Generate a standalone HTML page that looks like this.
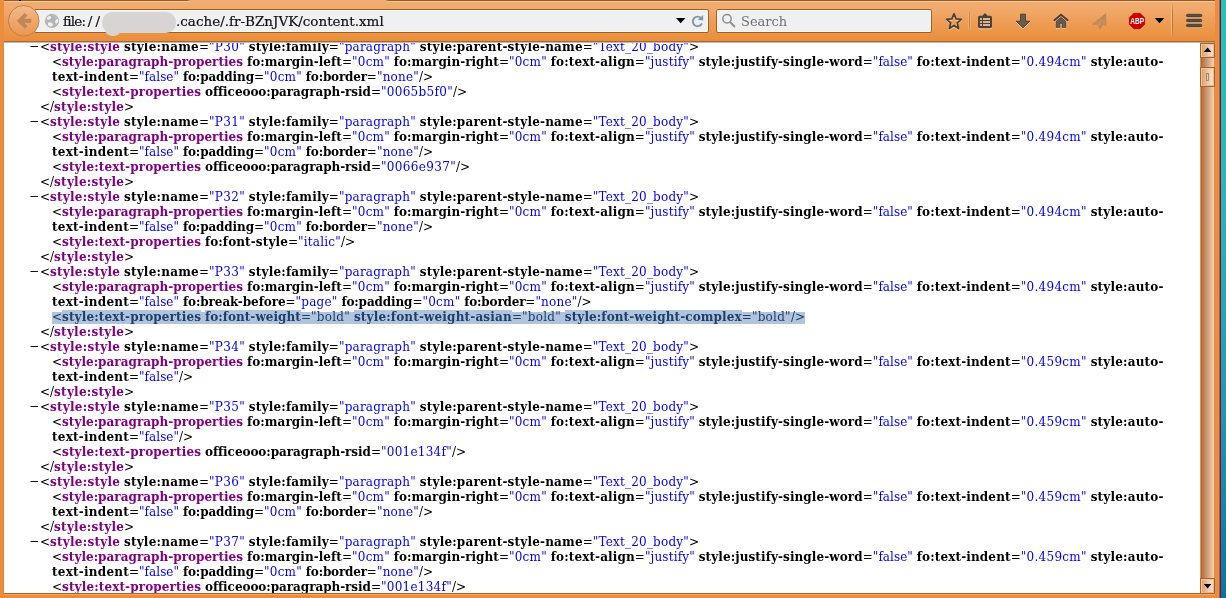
<!DOCTYPE html>
<html><head><meta charset="utf-8"><title>content.xml</title>
<style>
html,body{margin:0;padding:0;}
body{width:1226px;height:598px;overflow:hidden;position:relative;background:#eb8d3c;font-family:"DejaVu Serif","Liberation Serif",serif;}
#desk{position:absolute;left:1221px;top:0;width:5px;height:598px;background:linear-gradient(#28c0b8 0%,#2cb2ba 33%,#28a6b8 50%,#2498b4 67%,#0c74a0 100%);}
#edge{position:absolute;left:1218px;top:0;width:3px;height:598px;background:linear-gradient(90deg,#ee9438 1px,#b4505e 1px,#b4505e 2px,#5a2430 2px);}
#tb{position:absolute;left:4px;top:0;width:1211px;height:42px;background:linear-gradient(#f0af76 0%,#f0a868 25%,#ee9e58 50%,#ec9648 75%,#e88c3a 100%);}
.tbtop{position:absolute;top:0;height:1px;background:#9e5a1e;}
.tbhi{position:absolute;top:1px;height:1px;background:#f8c8a0;}
#tbbot{position:absolute;left:0;top:41px;width:100%;height:1px;background:#b0672a;}
#url{position:absolute;left:30px;top:9px;width:673px;height:22px;border:1px solid #a55d20;border-radius:2px;background:#f0f0f0;box-shadow:inset 0 0 0 1px #f8f9fc;}
.ut{-webkit-text-stroke:0.200px #111;will-change:transform;position:absolute;top:10px;height:23px;line-height:23px;font-size:13.5px;color:#111;white-space:nowrap;}
#blob{position:absolute;left:102px;top:12px;width:74px;height:21px;border-radius:10px;background:#d7d4d3;}
#blob2{position:absolute;left:104.500px;top:24px;width:16px;height:11.700px;border-radius:8px/6px;background:#d7d4d3;}
#search{position:absolute;left:712px;top:9px;width:214px;height:22px;border:1px solid #a55d20;border-radius:2px;background:#f0f0f0;box-shadow:inset 0 0 0 1px #f8f9fc;}
#stext{will-change:transform;position:absolute;left:741px;top:10px;height:23px;line-height:23px;font-size:13px;color:#707070;}
#icons{position:absolute;left:0;top:0;}
#view{position:absolute;left:4px;top:42px;width:1196px;height:551px;background:#fff;overflow:hidden;}
#xml{will-change:transform;position:absolute;left:0;top:-2px;word-spacing:0.030px;white-space:nowrap;width:1196px;font-size:12px;line-height:15px;color:#000;padding-left:24px;box-sizing:border-box;}
.el{padding-left:12px;}
.ex{position:relative;top:-1px;display:inline-block;width:12px;margin-left:-12px;text-align:center;}
.ch{padding-left:12px;}
b.t{color:#800080;}
b.a{color:#000;}
.v{color:#0000ee;}
.sel{display:inline-block;height:15px;vertical-align:top;color:#1e3f6a;background:linear-gradient(transparent 2px,#b0c4de 2px,#b0c4de 14px,transparent 14px);}
.sel b{display:inline-block;height:15px;vertical-align:top;color:#1e3f6a;background:linear-gradient(#b0c4de 14px,transparent 14px);}
.sel .v{color:#1e3f6a;}
#sb{position:absolute;left:1200px;top:42px;width:15px;height:552px;background:linear-gradient(90deg,#ec8e3c 1px,#a86a40 1px,#d4a07a 8px,#f4d4bc 14px,#ea8c3c 14px);}
.sbtn{position:absolute;left:0;width:13px;border:1px solid #a4642c;background:linear-gradient(90deg,#d89c66,#ecc9aa 55%,#f6e8de);box-shadow:inset 1px 1px 0 #fcc088,inset -1px -1px 0 #e8b890;}
#vtop{position:absolute;left:4px;top:42px;width:1196px;height:1px;background:#b6bcc4;z-index:3;}
#vbot{position:absolute;left:4px;top:593px;width:1211px;height:1px;background:#a8642a;}
#vbot2{position:absolute;left:4px;top:594px;width:1211px;height:1px;background:#f4a864;}
</style></head><body>
<div id="desk"></div><div style="position:absolute;left:3px;top:42px;width:1px;height:552px;background:#e98832"></div><div id="edge"></div>
<div id="tb"><div class="tbtop" style="left:0;width:184px"></div><div class="tbtop" style="left:184px;width:2px;background:#b08c6c"></div><div class="tbhi" style="left:0;width:186px"></div><div class="tbtop" style="left:384px;width:827px"></div><div class="tbtop" style="left:382px;width:2px;background:#b08c6c"></div><div class="tbhi" style="left:384px;width:827px"></div><div id="tbbot"></div>
<div id="url"></div>
<div id="search"></div>
</div>
<div class="ut" style="left:62.700px"><span style="letter-spacing:-0.800px">file:</span><span style="letter-spacing:3.200px;margin-left:2.600px">//</span></div><div class="ut" style="left:176px">.cache/.fr-BZnJVK/content.xml</div>
<div id="blob"></div><div id="blob2"></div>
<div id="stext">Search</div>
<svg id="icons" width="1226" height="42" viewBox="0 0 1226 42">
<defs>
<linearGradient id="bk" x1="0" y1="0" x2="0" y2="1"><stop offset="0" stop-color="#f4ba8a"/><stop offset="1" stop-color="#ea9550"/></linearGradient>
<linearGradient id="sepd" x1="0" y1="0" x2="0" y2="1"><stop offset="0" stop-color="#bb763c" stop-opacity="0"/><stop offset="0.250" stop-color="#bb763c"/><stop offset="0.750" stop-color="#bb763c"/><stop offset="1" stop-color="#bb763c" stop-opacity="0"/></linearGradient>
<linearGradient id="sepl" x1="0" y1="0" x2="0" y2="1"><stop offset="0" stop-color="#f8cca4" stop-opacity="0"/><stop offset="0.250" stop-color="#f8cca4" stop-opacity="0.700"/><stop offset="0.750" stop-color="#f8cca4" stop-opacity="0.700"/><stop offset="1" stop-color="#f8cca4" stop-opacity="0"/></linearGradient>
</defs>
<rect x="19" y="0" width="2" height="1" fill="#000"/>
<!-- back button -->
<circle cx="23.7" cy="20.8" r="15.3" fill="url(#bk)" stroke="#c07f4a" stroke-width="1"/>
<path d="M17.100 20.800 L24.800 13.300 L27.100 15.600 L23.500 19.100 H30.900 V22.600 H23.500 L27.100 26.100 L24.800 28.300 Z" fill="#bf8656" stroke="#b67e50" stroke-width="0.500"/>
<!-- globe -->
<circle cx="52" cy="20.900" r="6.700" fill="#b4b4b4" stroke="#a6a6a6" stroke-width="0.600"/>
<g fill="#f2f2f2"><ellipse cx="49" cy="17.900" rx="2.400" ry="1.500" transform="rotate(-28 49 17.900)"/><ellipse cx="50.300" cy="24.400" rx="2.600" ry="2" transform="rotate(15 50.300 24.400)"/><ellipse cx="56.700" cy="21.200" rx="1.400" ry="2.300" transform="rotate(22 56.700 21.200)"/><circle cx="56" cy="17.500" r="0.700" opacity="0.600"/><circle cx="53.500" cy="15.800" r="0.600" opacity="0.500"/></g>
<!-- url dropdown -->
<path d="M676 18 h9.400 l-4.700 5.200 z" fill="#000"/>
<!-- reload -->
<path d="M701.200 18.200 A4.800 4.800 0 1 0 702 23.300" fill="none" stroke="#8296a8" stroke-width="1.900"/>
<path d="M697.800 19.800 L703.200 15 L703.200 20.600 z" fill="#8296a8"/>
<!-- magnifier -->
<circle cx="727" cy="18.800" r="4.200" fill="none" stroke="#8e8e8e" stroke-width="1.500"/>
<path d="M730 22 L735 27" stroke="#8e8e8e" stroke-width="1.800"/>
<!-- star -->
<path d="M954 13.900 L956.100 18.900 L961.300 19.300 L957.400 22.900 L958.500 28.600 L954 25.600 L949.500 28.600 L950.600 22.900 L946.700 19.300 L951.900 18.900 Z" fill="none" stroke="#4e4136" stroke-width="1.800" stroke-linejoin="round" style="filter:drop-shadow(0 1px 0 rgba(255,222,188,.75))"/>
<!-- separator -->
<rect x="968" y="11.500" width="3" height="19" fill="#f6c496" opacity="0.400"/>
<rect x="969" y="11.500" width="1" height="19" fill="#cc8748"/>
<g style="filter:drop-shadow(0 1px 0 rgba(255,222,188,.75))">
<!-- bookmarks menu -->
<path d="M985 13 l2.800 3 h-5.600 z" fill="#4e4136"/>
<rect x="978" y="15.800" width="14" height="12.400" rx="1.800" fill="#4e4136"/>
<g fill="#fbd2a6"><rect x="980" y="18.200" width="2" height="1.600"/><rect x="983" y="18.200" width="7" height="1.600"/><rect x="980" y="21.200" width="2" height="1.600"/><rect x="983" y="21.200" width="7" height="1.600"/><rect x="980" y="24.200" width="2" height="1.600"/><rect x="983" y="24.200" width="7" height="1.600"/></g>
<!-- download -->
<path d="M1020.500 14.200 h5 v7 h4.300 L1023 28 L1016.200 21.200 h4.300 z" fill="#685a4e" stroke="#3e332a" stroke-width="0.800"/>
<!-- home -->
<path d="M1053.800 20.800 L1061 14.800 L1068.200 20.800" fill="none" stroke="#4a3d32" stroke-width="1.900"/>
<path d="M1056.300 27.600 V21.200 L1061 17.300 L1065.700 21.200 V27.600 H1062.200 V23.400 H1059.800 V27.600 Z" fill="#685a4e" stroke="#3e332a" stroke-width="0.700"/>
</g>
<!-- paper plane -->
<g fill="#c48e60" stroke="#b57d4e" stroke-width="0.600" stroke-linejoin="round"><path d="M1105.700 13.900 L1092.500 24.200 L1098.300 24.300 Z"/><path d="M1105.700 13.900 L1100.700 23.400 L1105.900 25.800 Z"/><path d="M1097.800 24.700 L1100.200 29.100 L1102.300 25 L1100.300 24.200 L1099.900 26.600 Z"/></g>
<!-- ABP -->
<path d="M1133.800 13.300 h6.400 l4.500 4.500 v6.400 l-4.500 4.500 h-6.400 l-4.500 -4.500 v-6.400 z" fill="#cc0000" stroke="#a60000" stroke-width="0.600"/>
<text x="1137.200" y="24" font-family="'Liberation Sans',sans-serif" font-weight="bold" font-size="8.400" fill="#fff" text-anchor="middle" textLength="13.800" lengthAdjust="spacingAndGlyphs">ABP</text>
<path d="M1154.800 18 h9.400 l-4.700 5.200 z" fill="#000"/>
<!-- separator 2 -->
<rect x="1171" y="3" width="1" height="35" fill="url(#sepl)"/>
<rect x="1172" y="3" width="1" height="35" fill="url(#sepd)"/>
<!-- hamburger -->
<g fill="#fbd0a8"><rect x="1186.500" y="15" width="15.200" height="3" rx="1.500"/><rect x="1186.500" y="20" width="15.200" height="3" rx="1.500"/><rect x="1186.500" y="25" width="15.200" height="3" rx="1.500"/></g>
<g fill="#5c4e42" stroke="#3a2f26" stroke-width="0.700"><rect x="1186.400" y="14.300" width="15.400" height="2.600" rx="1.300"/><rect x="1186.400" y="19.300" width="15.400" height="2.600" rx="1.300"/><rect x="1186.400" y="24.300" width="15.400" height="2.600" rx="1.300"/></g>
</svg>
<div id="vtop"></div>
<div id="view"><div id="xml">
<div class="el"><span class="ex">−</span>&lt;<b class="t" style="letter-spacing:0.24px">style:style</b> <b class="a" style="letter-spacing:0.227px">style:name</b>=<span class="v" style="letter-spacing:0.323px">"P30"</span> <b class="a" style="letter-spacing:0.198px">style:family</b>=<span class="v" style="letter-spacing:0.205px">"paragraph"</span> <b class="a" style="letter-spacing:0.194px">style:parent-style-name</b>=<span class="v" style="letter-spacing:0.188px">"Text_20_body"</span>&gt;
<div class="ch">
<div class="ln">&lt;<b class="t" style="letter-spacing:0.027px">style:paragraph-properties</b> <b class="a" style="letter-spacing:0.075px">fo:margin-left</b>=<span class="v" style="letter-spacing:0.245px">"0cm"</span> <b class="a" style="letter-spacing:0.028px">fo:margin-right</b>=<span class="v" style="letter-spacing:0.245px">"0cm"</span> <b class="a" style="letter-spacing:0.119px">fo:text-align</b>=<span class="v" style="letter-spacing:0.164px">"justify"</span> <b class="a" style="letter-spacing:0.097px">style:justify-single-word</b>=<span class="v" style="letter-spacing:0.038px">"false"</span> <b class="a" style="letter-spacing:0.141px">fo:text-indent</b>=<span class="v" style="letter-spacing:0.279px">"0.494cm"</span> <b class="a" style="letter-spacing:0.189px">style:auto-</b><br><b class="a" style="letter-spacing:0.233px">text-indent</b>=<span class="v" style="letter-spacing:0.038px">"false"</span> <b class="a" style="letter-spacing:-0.122px">fo:padding</b>=<span class="v" style="letter-spacing:0.245px">"0cm"</span> <b class="a" style="letter-spacing:-0.184px">fo:border</b>=<span class="v" style="letter-spacing:0.196px">"none"</span>/&gt;</div>
<div class="ln">&lt;<b class="t" style="letter-spacing:0.128px">style:text-properties</b> <b class="a" style="letter-spacing:-0.048px">officeooo:paragraph-rsid</b>=<span class="v" style="letter-spacing:0.303px">"0065b5f0"</span>/&gt;</div>
</div>
<div class="ln">&lt;/<b class="t" style="letter-spacing:0.24px">style:style</b>&gt;</div></div>
<div class="el"><span class="ex">−</span>&lt;<b class="t" style="letter-spacing:0.24px">style:style</b> <b class="a" style="letter-spacing:0.227px">style:name</b>=<span class="v" style="letter-spacing:0.323px">"P31"</span> <b class="a" style="letter-spacing:0.198px">style:family</b>=<span class="v" style="letter-spacing:0.205px">"paragraph"</span> <b class="a" style="letter-spacing:0.194px">style:parent-style-name</b>=<span class="v" style="letter-spacing:0.188px">"Text_20_body"</span>&gt;
<div class="ch">
<div class="ln">&lt;<b class="t" style="letter-spacing:0.027px">style:paragraph-properties</b> <b class="a" style="letter-spacing:0.075px">fo:margin-left</b>=<span class="v" style="letter-spacing:0.245px">"0cm"</span> <b class="a" style="letter-spacing:0.028px">fo:margin-right</b>=<span class="v" style="letter-spacing:0.245px">"0cm"</span> <b class="a" style="letter-spacing:0.119px">fo:text-align</b>=<span class="v" style="letter-spacing:0.164px">"justify"</span> <b class="a" style="letter-spacing:0.097px">style:justify-single-word</b>=<span class="v" style="letter-spacing:0.038px">"false"</span> <b class="a" style="letter-spacing:0.141px">fo:text-indent</b>=<span class="v" style="letter-spacing:0.279px">"0.494cm"</span> <b class="a" style="letter-spacing:0.189px">style:auto-</b><br><b class="a" style="letter-spacing:0.233px">text-indent</b>=<span class="v" style="letter-spacing:0.038px">"false"</span> <b class="a" style="letter-spacing:-0.122px">fo:padding</b>=<span class="v" style="letter-spacing:0.245px">"0cm"</span> <b class="a" style="letter-spacing:-0.184px">fo:border</b>=<span class="v" style="letter-spacing:0.196px">"none"</span>/&gt;</div>
<div class="ln">&lt;<b class="t" style="letter-spacing:0.128px">style:text-properties</b> <b class="a" style="letter-spacing:-0.048px">officeooo:paragraph-rsid</b>=<span class="v" style="letter-spacing:0.342px">"0066e937"</span>/&gt;</div>
</div>
<div class="ln">&lt;/<b class="t" style="letter-spacing:0.24px">style:style</b>&gt;</div></div>
<div class="el"><span class="ex">−</span>&lt;<b class="t" style="letter-spacing:0.24px">style:style</b> <b class="a" style="letter-spacing:0.227px">style:name</b>=<span class="v" style="letter-spacing:0.323px">"P32"</span> <b class="a" style="letter-spacing:0.198px">style:family</b>=<span class="v" style="letter-spacing:0.205px">"paragraph"</span> <b class="a" style="letter-spacing:0.194px">style:parent-style-name</b>=<span class="v" style="letter-spacing:0.188px">"Text_20_body"</span>&gt;
<div class="ch">
<div class="ln">&lt;<b class="t" style="letter-spacing:0.027px">style:paragraph-properties</b> <b class="a" style="letter-spacing:0.075px">fo:margin-left</b>=<span class="v" style="letter-spacing:0.245px">"0cm"</span> <b class="a" style="letter-spacing:0.028px">fo:margin-right</b>=<span class="v" style="letter-spacing:0.245px">"0cm"</span> <b class="a" style="letter-spacing:0.119px">fo:text-align</b>=<span class="v" style="letter-spacing:0.164px">"justify"</span> <b class="a" style="letter-spacing:0.097px">style:justify-single-word</b>=<span class="v" style="letter-spacing:0.038px">"false"</span> <b class="a" style="letter-spacing:0.141px">fo:text-indent</b>=<span class="v" style="letter-spacing:0.279px">"0.494cm"</span> <b class="a" style="letter-spacing:0.189px">style:auto-</b><br><b class="a" style="letter-spacing:0.233px">text-indent</b>=<span class="v" style="letter-spacing:0.038px">"false"</span> <b class="a" style="letter-spacing:-0.122px">fo:padding</b>=<span class="v" style="letter-spacing:0.245px">"0cm"</span> <b class="a" style="letter-spacing:-0.184px">fo:border</b>=<span class="v" style="letter-spacing:0.196px">"none"</span>/&gt;</div>
<div class="ln">&lt;<b class="t" style="letter-spacing:0.128px">style:text-properties</b> <b class="a" style="letter-spacing:0.117px">fo:font-style</b>=<span class="v" style="letter-spacing:0.219px">"italic"</span>/&gt;</div>
</div>
<div class="ln">&lt;/<b class="t" style="letter-spacing:0.24px">style:style</b>&gt;</div></div>
<div class="el"><span class="ex">−</span>&lt;<b class="t" style="letter-spacing:0.24px">style:style</b> <b class="a" style="letter-spacing:0.227px">style:name</b>=<span class="v" style="letter-spacing:0.323px">"P33"</span> <b class="a" style="letter-spacing:0.198px">style:family</b>=<span class="v" style="letter-spacing:0.205px">"paragraph"</span> <b class="a" style="letter-spacing:0.194px">style:parent-style-name</b>=<span class="v" style="letter-spacing:0.188px">"Text_20_body"</span>&gt;
<div class="ch">
<div class="ln">&lt;<b class="t" style="letter-spacing:0.027px">style:paragraph-properties</b> <b class="a" style="letter-spacing:0.075px">fo:margin-left</b>=<span class="v" style="letter-spacing:0.245px">"0cm"</span> <b class="a" style="letter-spacing:0.028px">fo:margin-right</b>=<span class="v" style="letter-spacing:0.245px">"0cm"</span> <b class="a" style="letter-spacing:0.119px">fo:text-align</b>=<span class="v" style="letter-spacing:0.164px">"justify"</span> <b class="a" style="letter-spacing:0.097px">style:justify-single-word</b>=<span class="v" style="letter-spacing:0.038px">"false"</span> <b class="a" style="letter-spacing:0.141px">fo:text-indent</b>=<span class="v" style="letter-spacing:0.279px">"0.494cm"</span> <b class="a" style="letter-spacing:0.189px">style:auto-</b><br><b class="a" style="letter-spacing:0.233px">text-indent</b>=<span class="v" style="letter-spacing:0.038px">"false"</span> <b class="a" style="letter-spacing:-0.077px">fo:break-before</b>=<span class="v" style="letter-spacing:0.224px">"page"</span> <b class="a" style="letter-spacing:-0.122px">fo:padding</b>=<span class="v" style="letter-spacing:0.245px">"0cm"</span> <b class="a" style="letter-spacing:-0.184px">fo:border</b>=<span class="v" style="letter-spacing:0.196px">"none"</span>/&gt;</div>
<div class="ln"><span class="sel">&lt;<b class="t" style="letter-spacing:0.128px">style:text-properties</b> <b class="a" style="letter-spacing:0.058px">fo:font-weight</b>=<span class="v" style="letter-spacing:0.256px">"bold"</span> <b class="a" style="letter-spacing:0.171px">style:font-weight-asian</b>=<span class="v" style="letter-spacing:0.256px">"bold"</span> <b class="a" style="letter-spacing:0.111px">style:font-weight-complex</b>=<span class="v" style="letter-spacing:0.256px">"bold"</span>/&gt;</span></div>
</div>
<div class="ln">&lt;/<b class="t" style="letter-spacing:0.24px">style:style</b>&gt;</div></div>
<div class="el"><span class="ex">−</span>&lt;<b class="t" style="letter-spacing:0.24px">style:style</b> <b class="a" style="letter-spacing:0.227px">style:name</b>=<span class="v" style="letter-spacing:0.323px">"P34"</span> <b class="a" style="letter-spacing:0.198px">style:family</b>=<span class="v" style="letter-spacing:0.205px">"paragraph"</span> <b class="a" style="letter-spacing:0.194px">style:parent-style-name</b>=<span class="v" style="letter-spacing:0.188px">"Text_20_body"</span>&gt;
<div class="ch">
<div class="ln">&lt;<b class="t" style="letter-spacing:0.027px">style:paragraph-properties</b> <b class="a" style="letter-spacing:0.075px">fo:margin-left</b>=<span class="v" style="letter-spacing:0.245px">"0cm"</span> <b class="a" style="letter-spacing:0.028px">fo:margin-right</b>=<span class="v" style="letter-spacing:0.245px">"0cm"</span> <b class="a" style="letter-spacing:0.119px">fo:text-align</b>=<span class="v" style="letter-spacing:0.164px">"justify"</span> <b class="a" style="letter-spacing:0.097px">style:justify-single-word</b>=<span class="v" style="letter-spacing:0.038px">"false"</span> <b class="a" style="letter-spacing:0.141px">fo:text-indent</b>=<span class="v" style="letter-spacing:0.279px">"0.459cm"</span> <b class="a" style="letter-spacing:0.189px">style:auto-</b><br><b class="a" style="letter-spacing:0.233px">text-indent</b>=<span class="v" style="letter-spacing:0.038px">"false"</span>/&gt;</div>
</div>
<div class="ln">&lt;/<b class="t" style="letter-spacing:0.24px">style:style</b>&gt;</div></div>
<div class="el"><span class="ex">−</span>&lt;<b class="t" style="letter-spacing:0.24px">style:style</b> <b class="a" style="letter-spacing:0.227px">style:name</b>=<span class="v" style="letter-spacing:0.323px">"P35"</span> <b class="a" style="letter-spacing:0.198px">style:family</b>=<span class="v" style="letter-spacing:0.205px">"paragraph"</span> <b class="a" style="letter-spacing:0.194px">style:parent-style-name</b>=<span class="v" style="letter-spacing:0.188px">"Text_20_body"</span>&gt;
<div class="ch">
<div class="ln">&lt;<b class="t" style="letter-spacing:0.027px">style:paragraph-properties</b> <b class="a" style="letter-spacing:0.075px">fo:margin-left</b>=<span class="v" style="letter-spacing:0.245px">"0cm"</span> <b class="a" style="letter-spacing:0.028px">fo:margin-right</b>=<span class="v" style="letter-spacing:0.245px">"0cm"</span> <b class="a" style="letter-spacing:0.119px">fo:text-align</b>=<span class="v" style="letter-spacing:0.164px">"justify"</span> <b class="a" style="letter-spacing:0.097px">style:justify-single-word</b>=<span class="v" style="letter-spacing:0.038px">"false"</span> <b class="a" style="letter-spacing:0.141px">fo:text-indent</b>=<span class="v" style="letter-spacing:0.279px">"0.459cm"</span> <b class="a" style="letter-spacing:0.189px">style:auto-</b><br><b class="a" style="letter-spacing:0.233px">text-indent</b>=<span class="v" style="letter-spacing:0.038px">"false"</span>/&gt;</div>
<div class="ln">&lt;<b class="t" style="letter-spacing:0.128px">style:text-properties</b> <b class="a" style="letter-spacing:-0.048px">officeooo:paragraph-rsid</b>=<span class="v" style="letter-spacing:0.261px">"001e134f"</span>/&gt;</div>
</div>
<div class="ln">&lt;/<b class="t" style="letter-spacing:0.24px">style:style</b>&gt;</div></div>
<div class="el"><span class="ex">−</span>&lt;<b class="t" style="letter-spacing:0.24px">style:style</b> <b class="a" style="letter-spacing:0.227px">style:name</b>=<span class="v" style="letter-spacing:0.323px">"P36"</span> <b class="a" style="letter-spacing:0.198px">style:family</b>=<span class="v" style="letter-spacing:0.205px">"paragraph"</span> <b class="a" style="letter-spacing:0.194px">style:parent-style-name</b>=<span class="v" style="letter-spacing:0.188px">"Text_20_body"</span>&gt;
<div class="ch">
<div class="ln">&lt;<b class="t" style="letter-spacing:0.027px">style:paragraph-properties</b> <b class="a" style="letter-spacing:0.075px">fo:margin-left</b>=<span class="v" style="letter-spacing:0.245px">"0cm"</span> <b class="a" style="letter-spacing:0.028px">fo:margin-right</b>=<span class="v" style="letter-spacing:0.245px">"0cm"</span> <b class="a" style="letter-spacing:0.119px">fo:text-align</b>=<span class="v" style="letter-spacing:0.164px">"justify"</span> <b class="a" style="letter-spacing:0.097px">style:justify-single-word</b>=<span class="v" style="letter-spacing:0.038px">"false"</span> <b class="a" style="letter-spacing:0.141px">fo:text-indent</b>=<span class="v" style="letter-spacing:0.279px">"0.459cm"</span> <b class="a" style="letter-spacing:0.189px">style:auto-</b><br><b class="a" style="letter-spacing:0.233px">text-indent</b>=<span class="v" style="letter-spacing:0.038px">"false"</span> <b class="a" style="letter-spacing:-0.122px">fo:padding</b>=<span class="v" style="letter-spacing:0.245px">"0cm"</span> <b class="a" style="letter-spacing:-0.184px">fo:border</b>=<span class="v" style="letter-spacing:0.196px">"none"</span>/&gt;</div>
</div>
<div class="ln">&lt;/<b class="t" style="letter-spacing:0.24px">style:style</b>&gt;</div></div>
<div class="el"><span class="ex">−</span>&lt;<b class="t" style="letter-spacing:0.24px">style:style</b> <b class="a" style="letter-spacing:0.227px">style:name</b>=<span class="v" style="letter-spacing:0.323px">"P37"</span> <b class="a" style="letter-spacing:0.198px">style:family</b>=<span class="v" style="letter-spacing:0.205px">"paragraph"</span> <b class="a" style="letter-spacing:0.194px">style:parent-style-name</b>=<span class="v" style="letter-spacing:0.188px">"Text_20_body"</span>&gt;
<div class="ch">
<div class="ln">&lt;<b class="t" style="letter-spacing:0.027px">style:paragraph-properties</b> <b class="a" style="letter-spacing:0.075px">fo:margin-left</b>=<span class="v" style="letter-spacing:0.245px">"0cm"</span> <b class="a" style="letter-spacing:0.028px">fo:margin-right</b>=<span class="v" style="letter-spacing:0.245px">"0cm"</span> <b class="a" style="letter-spacing:0.119px">fo:text-align</b>=<span class="v" style="letter-spacing:0.164px">"justify"</span> <b class="a" style="letter-spacing:0.097px">style:justify-single-word</b>=<span class="v" style="letter-spacing:0.038px">"false"</span> <b class="a" style="letter-spacing:0.141px">fo:text-indent</b>=<span class="v" style="letter-spacing:0.279px">"0.459cm"</span> <b class="a" style="letter-spacing:0.189px">style:auto-</b><br><b class="a" style="letter-spacing:0.233px">text-indent</b>=<span class="v" style="letter-spacing:0.038px">"false"</span> <b class="a" style="letter-spacing:-0.122px">fo:padding</b>=<span class="v" style="letter-spacing:0.245px">"0cm"</span> <b class="a" style="letter-spacing:-0.184px">fo:border</b>=<span class="v" style="letter-spacing:0.196px">"none"</span>/&gt;</div>
<div class="ln">&lt;<b class="t" style="letter-spacing:0.128px">style:text-properties</b> <b class="a" style="letter-spacing:-0.048px">officeooo:paragraph-rsid</b>=<span class="v" style="letter-spacing:0.261px">"001e134f"</span>/&gt;</div>
</div>
<div class="ln">&lt;/<b class="t" style="letter-spacing:0.24px">style:style</b>&gt;</div></div>
</div></div>
<div id="sb">
<div style="position:absolute;left:0;top:0;width:15px;height:1px;background:#b4a696"></div>
<div class="sbtn" style="top:1px;height:13px"></div>
<div class="sbtn" style="top:25px;height:18px"></div>
<div class="sbtn" style="top:536px;height:14px"></div>
<svg style="position:absolute;left:0;top:0" width="15" height="552" viewBox="0 0 15 552">
<path d="M3.800 10 h7.600 l-3.800 -4.400 z" fill="#000"/>
<path d="M3.800 542 h7.600 l-3.800 4.400 z" fill="#000"/>
<rect x="6.500" y="31.500" width="2" height="7" fill="#c8d4e0" stroke="#b07038" stroke-width="0.800"/>
</svg>
</div>
<div id="vbot"></div><div id="vbot2"></div>
</body></html>
